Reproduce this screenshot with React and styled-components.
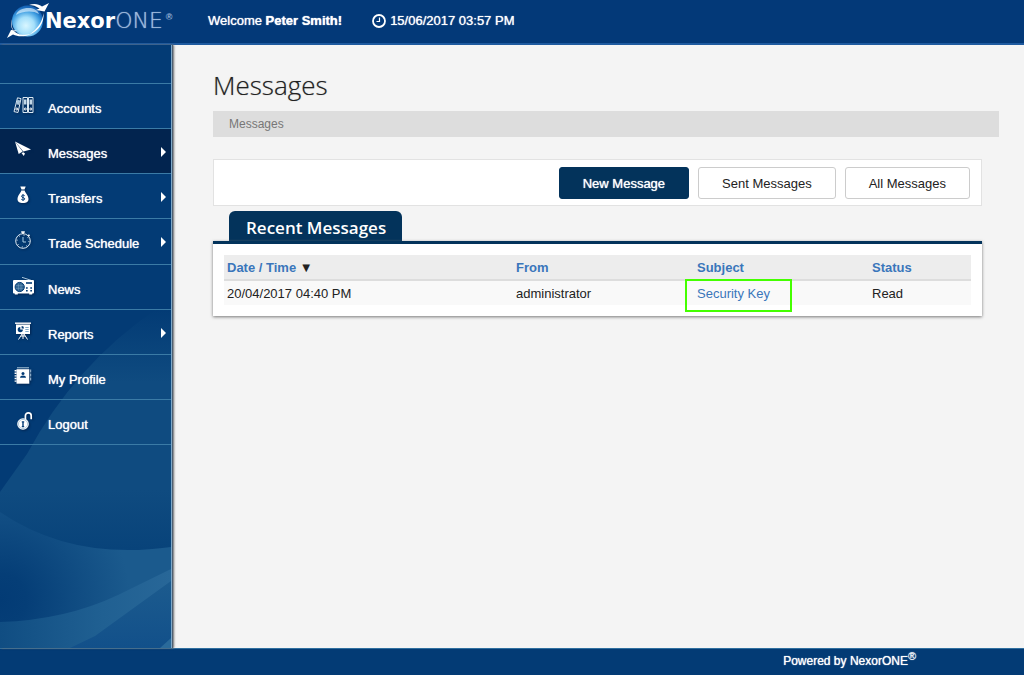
import React from 'react';
import styled, { createGlobalStyle } from 'styled-components';

const GlobalStyle = createGlobalStyle`
    * {
        box-sizing: border-box;
    }
    body {
        margin: 0;
        background: #f4f4f4;
        color: #222;
        font: 13px/20px "Liberation Sans", Arial, sans-serif;
    }
`

const Page = styled.div`
    min-height: 100vh;
    display: flex;
    flex-direction: column;
`

const Header = styled.header`
    display: flex;
    align-items: center;
    height: 45px;
    padding-bottom: 2px;
    background: #033978;
    border-bottom: 2px solid #1e5a9f;
    color: #fff;
`

const Brand = styled.a`
    display: flex;
    align-items: center;
    width: 208px;
    padding-left: 6px;
    color: #fff;
    text-decoration: none;
`

const BrandName = styled.span`
    margin-left: -5px;
    font: bold 21px/24px "DejaVu Sans", sans-serif;
    white-space: nowrap;
`

const BrandSuffix = styled.span`
    color: #9db9dc;
    font-size: 22px;
    font-weight: 200;
    text-shadow: 0 0 1px #9db9dc;
`

const BrandMark = styled.sup`
    align-self: flex-start;
    margin-left: 3px;
    color: #9db9dc;
    font-size: 9px;
    font-weight: bold;
    line-height: 30px;
`

const Greeting = styled.span`
    margin-right: 30px;
    text-shadow: 0 0 1px #fff;
`

const Clock = styled.time`
    display: flex;
    align-items: center;
    gap: 4px;
    text-shadow: 0 0 1px #fff;
`

const Body = styled.div`
    flex: 1;
    display: flex;
`

const Sidebar = styled.nav`
    position: relative;
    flex: none;
    width: 172px;
    padding-top: 38px;
    background: #033b75;
    border-right: 1px solid #7fa9c9;
    box-shadow: 1px 0 1px #4f5f70, 2px 0 2px #777;
`

const Backdrop = styled.svg`
    position: absolute;
    left: 0;
    bottom: 0;
    width: 100%;
    height: 338px;
`

const Menu = styled.ul`
    position: relative;
    display: grid;
    grid-auto-rows: 1fr;
    height: 362px;
    margin: 0;
    padding: 0;
    list-style: none;
    border-top: 1px solid #3b7ba6;
`

const MenuLink = styled.a`
    display: flex;
    align-items: center;
    height: 100%;
    padding: 2px 5px 0 11px;
    background: ${props => props.$active ? '#02244f' : 'transparent'};
    border-bottom: 1px solid #3b7ba6;
    color: #fff;
    text-decoration: none;
    text-shadow: 0 0 1px #fff;

    svg {
        flex: none;
        margin-bottom: 4px;
        filter: drop-shadow(1px 1px 1px #02244f);
    }
`

const MenuLabel = styled.span`
    flex: 1;
    padding: 4px 0 0 13px;
    white-space: nowrap;
`

const Arrow = styled.span`
    border: 5px solid transparent;
    border-left-color: #fff;
    border-right-width: 0;
`

const Main = styled.main`
    flex: 1;
    min-width: 0;
    padding: 25px 25px 24px 41px;
`

const Title = styled.h1`
    margin: 0 0 11px;
    font: 300 26px/30px "Open Sans", sans-serif;
    text-shadow: 0 0 1px #999;
`

const Breadcrumb = styled.div`
    height: 26px;
    padding-left: 16px;
    background: #ddd;
    color: #777;
    font-size: 12px;
    line-height: 26px;
`

const Content = styled.div`
    margin: 22px 17px 0 0;
`

const Toolbar = styled.div`
    display: flex;
    justify-content: flex-end;
    gap: 9px;
    padding: 7px 11px 6px;
    background: #fff;
    border: 1px solid #e2e2e2;
`

const Button = styled.button`
    height: 32px;
    padding: 2px 23px 0;
    background: ${props => props.$primary ? '#03335b' : '#fff'};
    border: 1px solid ${props => props.$primary ? '#03335b' : '#ccc'};
    border-radius: 3px;
    color: ${props => props.$primary ? '#fff' : '#222'};
    font: inherit;
    text-shadow: ${props => props.$primary ? '0 0 1px #fff' : 'none'};
`

const Tab = styled.h2`
    width: max-content;
    margin: 5px 0 0 16px;
    padding: 4px 16px 0 17px;
    background: #03335b;
    border-radius: 6px 6px 0 0;
    color: #fff;
    font: 600 17px/26px "Open Sans", sans-serif;
`

const Panel = styled.section`
    padding: 11px;
    background: #fff;
    border-top: 3px solid #03335b;
    box-shadow: 0 1px 3px #777;
`

const Table = styled.table`
    width: 100%;
    table-layout: fixed;
    border-collapse: separate;
    border-spacing: 0;
    text-align: left;
`

const HeadCell = styled.th`
    width: ${props => props.$width}px;
    height: 26px;
    padding: 2px 3px 0;
    background: #ededed;
    border-bottom: 2px solid #ddd;
`

const Cell = styled.td`
    height: 24px;
    padding: 2px 3px 0;
    background: #f9f9f9;
`

const TextLink = styled.a`
    color: #3a76bb;
    text-decoration: none;
`

const Marked = styled.span`
    position: relative;

    &::after {
        content: "";
        position: absolute;
        inset: -7px -22px -11px -12px;
        border: 2px solid #4f0;
        pointer-events: none;
    }
`

const Footer = styled.footer`
    height: 27px;
    padding-right: 108px;
    background: #033b75;
    border-top: 1px solid #2f6f9f;
    color: #fff;
    font-size: 12px;
    line-height: 24px;
    text-align: right;
    text-shadow: 0 0 1px #fff;

    sup {
        font-size: 11px;
        line-height: 1;
    }
`

const Icon = ({ children }) => (
    <svg width="24" height="18" viewBox="0 0 24 18" fill="none" stroke="#fff" aria-hidden="true">
        {children}
    </svg>
)

const AccountsIcon = () => (
    <Icon>
        <path d="M6.5 1.8 10 2.6 7 16.5 3 15.6Z" stroke="#dbe9f4" />
        <path d="M6.3 3.8l3 .7-1 4.4-3-.7z" fill="#a9c6dc" stroke="none" />
        <circle cx="5.8" cy="13" r="1" />
        <path d="M12 1.5h4.5v15H12zM17.5 1.5H22v15h-4.5z" stroke="#dbe9f4" />
        <path d="M13 3.500h2.500v5H13zM18.500 3.500H21v5h-2.500z" fill="#c3d8e8" stroke="none" />
        <circle cx="14.3" cy="13" r="1" />
        <circle cx="19.8" cy="13" r="1" />
    </Icon>
)

const MessagesIcon = () => (
    <Icon>
        <path d="M4 .5 20 8.5 12.3 10.5Z" fill="#fff" stroke="none" />
        <path d="M4 .5 11.7 10.5 7.7 13Z" fill="#fff" stroke="none" />
        <path d="M10.5 12 12.3 11.300 14 12.5 12.8 15Z" fill="#fff" stroke="none" />
    </Icon>
)

const TransfersIcon = () => (
    <Icon>
        <path d="M9.3.5h5.4l-1.2 3h-3z" fill="#fff" stroke="none" />
        <path d="M10.3 4.5h3.4c.4 2.4 3.8 4.8 3.8 8.5 0 2.9-2 4-5.5 4s-5.5-1.1-5.5-4c0-3.7 3.4-6.1 3.8-8.5z" fill="#fff" stroke="none" />
        <path d="M13.7 9.7c-1-1-3.2-.7-3.2.6 0 1.6 3.2 1 3.2 2.5s-2.2 1.5-3.4.5M12 8.2v6.6" stroke="#033b75" />
    </Icon>
)

const ScheduleIcon = () => (
    <Icon>
        <circle cx="12" cy="10" r="7.3" stroke="#dbe9f4" />
        <circle cx="12" cy="10" r="5.9" stroke="#dbe9f4" strokeDasharray="1 3.6" />
        <path d="M12 3V.8M10.2.9h3.6M17.3 3.7l1.2 1.2" strokeWidth="1.5" />
        <path d="M12 6v5h3" stroke="#a9d0e8" />
    </Icon>
)

const NewsIcon = () => (
    <Icon>
        <path d="M11 .3 20 3.3" stroke="#a9c6dc" />
        <path d="M3 3h19a1 1 0 0 1 1 1v11.5a1 1 0 0 1-1 1h-.8v1h-3v-1H6.800v1h-3v-1H3a1 1 0 0 1-1-1V4a1 1 0 0 1 1-1z" fill="#fff" stroke="none" />
        <circle cx="8.7" cy="10" r="4.6" fill="#2b618f" stroke="#033b75" />
        <path d="M5 8.7h7.4M5 11.3h7.4M7.4 6.5v7M10 6.5v7" stroke="#7fa5c4" strokeWidth=".5" />
        <path d="M15 6h6" stroke="#033b75" strokeWidth="1.6" />
        <path d="M15 11h1.7M19.3 11H21M15 13.7h1.7M19.3 13.7H21" stroke="#033b75" strokeWidth="1.4" />
    </Icon>
)

const ReportsIcon = () => (
    <Icon>
        <path d="M4 1.2h16" strokeWidth="1.4" />
        <path d="M5 2.5h14V12H5z" fill="#fff" stroke="none" />
        <path d="M9.3 5v2.6h2.6A2.6 2.6 0 1 1 9.3 5z" fill="#033b75" stroke="none" />
        <path d="M10.6 4v2.4H13A2.4 2.4 0 0 0 10.6 4z" fill="#033b75" stroke="none" />
        <path d="M14.3 5.5h3.4M14.3 7.5h3.4M14.3 9.5h3.4" stroke="#7fa9c9" />
        <path d="M12 11.7V17M11 12l-3.5 5.5M13 12l3.5 5.5M10 14h4" />
    </Icon>
)

const ProfileIcon = () => (
    <Icon>
        <path d="M6 .8h12" stroke="#a9c6dc" />
        <path d="M5.5 2.2h12.8v14.5H5.5z" fill="#fff" stroke="none" />
        <path d="M4.6 3v13" strokeWidth="2" strokeDasharray="1.4 1.2" />
        <path d="M19.7 2.5v3M19.7 6.5v3M19.7 10.5v3" stroke="#a9c6dc" />
        <circle cx="12" cy="6.5" r="1.5" fill="#033b75" stroke="none" />
        <path d="M9 10.8c0-3 6-3 6 0z" fill="#033b75" stroke="none" />
    </Icon>
)

const LogoutIcon = () => (
    <Icon>
        <path d="M14.4 8V3.7c0-3.8 5.8-3.8 5.8 0v3.5" strokeWidth="1.7" />
        <circle cx="12" cy="12" r="5.8" fill="#fff" stroke="none" />
        <circle cx="12" cy="12" r="4.6" stroke="#7fa9c9" strokeWidth=".6" />
        <path d="M12 9.7v5M10.8 9.9h2.4M10.8 14.6h2.4" stroke="#033b75" strokeWidth="1.4" />
    </Icon>
)

const Globe = () => (
    <svg width="44" height="38" viewBox="0 0 44 38" aria-hidden="true">
        <defs>
            <radialGradient id="ball" cx=".45" cy=".65" r=".6">
                <stop offset="0" stopColor="#d9f6ff" />
                <stop offset=".45" stopColor="#a5e0fb" />
                <stop offset=".8" stopColor="#3b9be0" />
                <stop offset="1" stopColor="#1766b8" />
            </radialGradient>
        </defs>
        <circle cx="21.5" cy="19" r="15.5" fill="url(#ball)" />
        <path d="M10 13c2-8 20-10 23-1-6-4-17-3-23 1z" fill="#e3f5ff" opacity=".65" />
        <path d="M23 3C28 1 33 2 36 4.500l7-3.500-4.500 8.500L30 8l3.500-1.500C30 4 27 3 23 3z" fill="#fff" />
        <path d="M37.500 11c1 10-5 18-14 21.500 8-6 13-12.500 14-21.500z" fill="#fff" />
        <path d="M6 17C4 22 5 27 9 30c4 3 10 3.500 16 2-6 3-13 3-18 .500L1 36l4-8 6 .500-2 1C5.500 27 5 22 6 17z" fill="#fff" />
    </svg>
)

const ClockIcon = () => (
    <svg width="14" height="14" viewBox="0 0 14 14" fill="none" stroke="#fff" aria-hidden="true">
        <circle cx="7" cy="7" r="6" strokeWidth="1.8" />
        <path d="M7.5 3.5v4h-3" strokeWidth="1.2" />
    </svg>
)

const menu = [
    { label: 'Accounts', icon: <AccountsIcon /> },
    { label: 'Messages', icon: <MessagesIcon />, active: true, arrow: true },
    { label: 'Transfers', icon: <TransfersIcon />, arrow: true },
    { label: 'Trade Schedule', icon: <ScheduleIcon />, arrow: true },
    { label: 'News', icon: <NewsIcon /> },
    { label: 'Reports', icon: <ReportsIcon />, arrow: true },
    { label: 'My Profile', icon: <ProfileIcon /> },
    { label: 'Logout', icon: <LogoutIcon /> },
]

const messages = [
    { date: '20/04/2017 04:40 PM', from: 'administrator', subject: 'Security Key', status: 'Read', marked: true },
]

const SidebarBackdrop = () => (
    <Backdrop viewBox="0 0 171 338" preserveAspectRatio="none" aria-hidden="true">
        <defs>
            <linearGradient id="beam" x1="0" y1="0" x2="0" y2="1">
                <stop offset="0" stopColor="#0f4b80" stopOpacity="0" />
                <stop offset=".3" stopColor="#0f4b80" />
                <stop offset=".75" stopColor="#0f4b80" />
                <stop offset="1" stopColor="#08437a" />
            </linearGradient>
            <radialGradient id="wave" gradientUnits="userSpaceOnUse" cx="0" cy="290" r="130">
                <stop offset="0" stopColor="#033b75" />
                <stop offset=".2" stopColor="#053e77" />
                <stop offset="1" stopColor="#1b5a8d" />
            </radialGradient>
            <linearGradient id="floor" x1="0" y1="0" x2="1" y2="0">
                <stop offset="0" stopColor="#104d82" />
                <stop offset=".6" stopColor="#206092" />
                <stop offset="1" stopColor="#286798" />
            </linearGradient>
            <linearGradient id="shade" x1="0" y1="0" x2="0" y2="1">
                <stop offset="0" stopColor="#1c5b8e" />
                <stop offset="1" stopColor="#12508a" />
            </linearGradient>
        </defs>
        <path d="M171 0H155Q75 55 27 144L0 182V240H171Z" fill="url(#beam)" />
        <path d="M0 202Q72 251 171 237V338H0Z" fill="url(#wave)" />
        <path d="M0 312Q65 310 118 285L171 259V338H0Z" fill="url(#floor)" />
        <path d="M171 271L95 326 70 338H171Z" fill="url(#shade)" />
        <path d="M171 328V338H160Z" fill="#2a6a9a" />
    </Backdrop>
)

const App = () => {
    return (
    <Page>
        <GlobalStyle />
        <Header>
            <Brand href="#">
                <Globe />
                <BrandName>Nexor<BrandSuffix>ONE</BrandSuffix></BrandName>
                <BrandMark>®</BrandMark>
            </Brand>
            <Greeting>Welcome <b>Peter Smith!</b></Greeting>
            <Clock dateTime="2017-06-15T15:57"><ClockIcon />15/06/2017 03:57 PM</Clock>
        </Header>
        <Body>
            <Sidebar>
                <SidebarBackdrop />
                <Menu>
                    {menu.map(item => (
                        <li key={item.label}>
                            <MenuLink href="#" $active={item.active}>
                                {item.icon}
                                <MenuLabel>{item.label}</MenuLabel>
                                {item.arrow && <Arrow />}
                            </MenuLink>
                        </li>
                    ))}
                </Menu>
            </Sidebar>
            <Main>
                <Title>Messages</Title>
                <Breadcrumb>Messages</Breadcrumb>
                <Content>
                    <Toolbar>
                        <Button type="button" $primary>New Message</Button>
                        <Button type="button">Sent Messages</Button>
                        <Button type="button">All Messages</Button>
                    </Toolbar>
                    <Tab>Recent Messages</Tab>
                    <Panel>
                        <Table>
                            <thead>
                                <tr>
                                    <HeadCell $width={289}><TextLink href="#">Date / Time</TextLink> ▼</HeadCell>
                                    <HeadCell $width={181}><TextLink href="#">From</TextLink></HeadCell>
                                    <HeadCell $width={175}><TextLink href="#">Subject</TextLink></HeadCell>
                                    <HeadCell $width={102}><TextLink href="#">Status</TextLink></HeadCell>
                                </tr>
                            </thead>
                            <tbody>
                                {messages.map(message => (
                                    <tr key={message.date}>
                                        <Cell>{message.date}</Cell>
                                        <Cell>{message.from}</Cell>
                                        <Cell>
                                            {message.marked
                                                ? <Marked><TextLink href="#">{message.subject}</TextLink></Marked>
                                                : <TextLink href="#">{message.subject}</TextLink>}
                                        </Cell>
                                        <Cell>{message.status}</Cell>
                                    </tr>
                                ))}
                            </tbody>
                        </Table>
                    </Panel>
                </Content>
            </Main>
        </Body>
        <Footer>Powered by NexorONE<sup>®</sup></Footer>
    </Page>
    )
}

export default App;
